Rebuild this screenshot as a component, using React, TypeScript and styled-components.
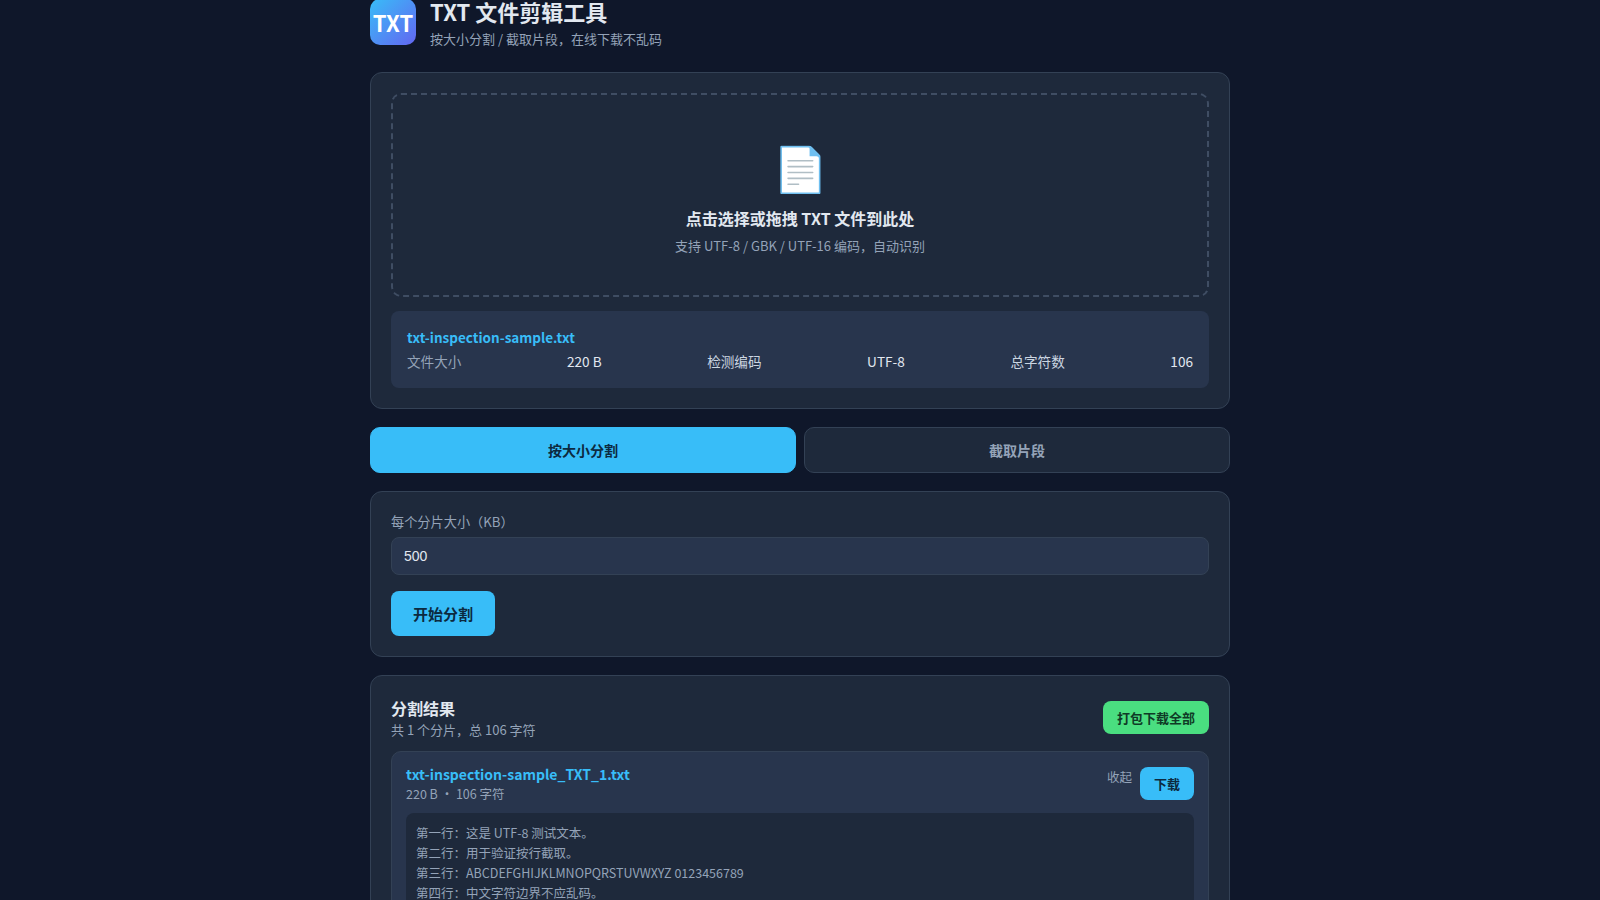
import { FC } from "react";
import styled, { createGlobalStyle } from "styled-components";

const GlobalStyle = createGlobalStyle`
	* {
		box-sizing: border-box;
	}
	html, body {
		margin: 0;
		height: 100%;
		overflow: hidden;
	}
	body {
		background: #0f172a;
		color: #e2e8f0;
		font-family: "Noto Sans CJK SC", "Noto Sans", sans-serif;
	}
`;

const previewLines = [
	"第一行：这是 UTF-8 测试文本。",
	"第二行：用于验证按行截取。",
	"第三行：ABCDEFGHIJKLMNOPQRSTUVWXYZ 0123456789",
	"第四行：中文字符边界不应乱码。",
];

const App: FC = () => {
	return (
		<>
			<GlobalStyle />
			<Page>
				<Header>
					<Logo>TXT</Logo>
					<div>
						<Title>TXT 文件剪辑工具</Title>
						<Subtitle>按大小分割 / 截取片段，在线下载不乱码</Subtitle>
					</div>
				</Header>

				<Card>
					<DropZone>
						<DropIcon>📄</DropIcon>
						<DropTitle>点击选择或拖拽 TXT 文件到此处</DropTitle>
						<DropHint>支持 UTF-8 / GBK / UTF-16 编码，自动识别</DropHint>
					</DropZone>
					<FileInfo>
						<FileName>txt-inspection-sample.txt</FileName>
						<FileStats>
							<StatLabel>文件大小</StatLabel>
							<StatValue>220 B</StatValue>
							<StatKey>检测编码</StatKey>
							<StatValue>UTF-8</StatValue>
							<StatKey>总字符数</StatKey>
							<StatValue>106</StatValue>
						</FileStats>
					</FileInfo>
				</Card>

				<Tabs>
					<Tab type="button" $active>
						按大小分割
					</Tab>
					<Tab type="button">截取片段</Tab>
				</Tabs>

				<Card>
					<FieldLabel htmlFor="chunk-size">每个分片大小（KB）</FieldLabel>
					<SizeInput id="chunk-size" defaultValue="500" />
					<StartBtn type="button">开始分割</StartBtn>
				</Card>

				<Card>
					<ResultHead>
						<div>
							<ResultTitle>分割结果</ResultTitle>
							<ResultMeta>共 1 个分片，总 106 字符</ResultMeta>
						</div>
						<ZipBtn type="button">打包下载全部</ZipBtn>
					</ResultHead>
					<Chunk>
						<ChunkHead>
							<div>
								<ChunkName>txt-inspection-sample_TXT_1.txt</ChunkName>
								<ChunkMeta>220 B ・ 106 字符</ChunkMeta>
							</div>
							<ChunkActions>
								<Collapse type="button">收起</Collapse>
								<DownloadBtn type="button">下载</DownloadBtn>
							</ChunkActions>
						</ChunkHead>
						<Preview>
							{previewLines.map((line) => (
								<div key={line}>{line}</div>
							))}
						</Preview>
					</Chunk>
				</Card>
			</Page>
		</>
	);
};

export default App;

const Page = styled.div`
	width: 860px;
	margin: -1px auto 0;
`;

const Header = styled.header`
	display: flex;
	align-items: flex-start;
	gap: 14px;
	margin-bottom: 23px;
`;

const Logo = styled.div`
	width: 46px;
	height: 46px;
	border-radius: 10px;
	background: linear-gradient(135deg, #38bdf8, #6366f1);
	color: #fff;
	font-size: 22px;
	font-weight: 700;
	display: flex;
	align-items: center;
	justify-content: center;
`;

const Title = styled.h1`
	margin: 0;
	font-size: 22px;
	font-weight: 700;
	line-height: 24px;
	color: #e2e8f0;
`;

const Subtitle = styled.p`
	margin: 6px 0 0;
	font-size: 13px;
	line-height: 20px;
	color: #94a3b8;
`;

const Card = styled.section`
	background: #1e293b;
	border: 1px solid #334155;
	border-radius: 12px;
	padding: 20px;
	margin-bottom: 18px;
`;

const DropZone = styled.div`
	height: 204px;
	border: 2px dashed #3f4d63;
	border-radius: 10px;
	display: flex;
	flex-direction: column;
	align-items: center;
	padding-top: 40px;
`;

const DropIcon = styled.div`
	font-size: 44px;
	line-height: 63px;
`;

const DropTitle = styled.div`
	font-size: 16px;
	font-weight: 600;
	line-height: 24px;
	margin-top: 8px;
	color: #e2e8f0;
`;

const DropHint = styled.div`
	font-size: 13px;
	line-height: 20px;
	margin-top: 6px;
	color: #94a3b8;
`;

const FileInfo = styled.div`
	margin-top: 14px;
	background: #28354d;
	border-radius: 8px;
	padding: 13px 16px 0;
	height: 77px;
`;

const FileName = styled.div`
	font-size: 13.5px;
	font-weight: 600;
	line-height: 26px;
	color: #38bdf8;
`;

const FileStats = styled.div`
	display: flex;
	justify-content: space-between;
	margin-top: 1px;
	font-size: 13.6px;
	line-height: 20px;
`;

const StatLabel = styled.span`
	color: #94a3b8;
`;

const StatKey = styled.span`
	color: #cbd5e1;
`;

const StatValue = styled.span`
	color: #e2e8f0;
`;

const Tabs = styled.div`
	display: grid;
	grid-template-columns: 1fr 1fr;
	gap: 8px;
	margin-bottom: 18px;
`;

const Tab = styled.button<{ $active?: boolean }>`
	height: 46px;
	border-radius: 10px;
	border: 1px solid ${(p) => (p.$active ? "#38bdf8" : "#334155")};
	background: ${(p) => (p.$active ? "#38bdf8" : "#1e293b")};
	color: ${(p) => (p.$active ? "#0c2a40" : "#94a3b8")};
	font-family: inherit;
	font-size: 14px;
	font-weight: 600;
`;

const FieldLabel = styled.label`
	display: block;
	font-size: 13.2px;
	line-height: 20px;
	margin-bottom: 5px;
	color: #94a3b8;
`;

const SizeInput = styled.input`
	display: block;
	width: 100%;
	height: 38px;
	background: #28354d;
	border: 1px solid #334155;
	border-radius: 8px;
	padding: 0 12px;
	color: #e2e8f0;
	font-family: "Liberation Sans", Arial, sans-serif;
	font-size: 14px;
`;

const StartBtn = styled.button`
	display: block;
	margin-top: 16px;
	width: 104px;
	height: 45px;
	border: none;
	border-radius: 8px;
	background: #38bdf8;
	color: #0c2a40;
	font-family: inherit;
	font-size: 15px;
	font-weight: 600;
`;

const ResultHead = styled.div`
	display: flex;
	justify-content: space-between;
	align-items: center;
	margin-bottom: 11px;
`;

const ResultTitle = styled.div`
	font-size: 16px;
	font-weight: 600;
	line-height: 24px;
	color: #e2e8f0;
`;

const ResultMeta = styled.div`
	font-size: 13px;
	line-height: 20px;
	color: #94a3b8;
`;

const ZipBtn = styled.button`
	height: 33px;
	width: 106px;
	margin-bottom: 1px;
	border: none;
	border-radius: 8px;
	background: #4ade80;
	color: #0f3a26;
	font-family: inherit;
	font-size: 13px;
	font-weight: 600;
`;

const Chunk = styled.div`
	background: #28354d;
	border: 1px solid #334155;
	border-radius: 10px;
	padding: 14px;
`;

const ChunkHead = styled.div`
	display: flex;
	justify-content: space-between;
	align-items: flex-start;
	margin-bottom: 10px;
`;

const ChunkName = styled.div`
	font-size: 14px;
	font-weight: 600;
	line-height: 16px;
	color: #38bdf8;
`;

const ChunkMeta = styled.div`
	margin-top: 3px;
	font-size: 12.5px;
	line-height: 18px;
	color: #94a3b8;
`;

const ChunkActions = styled.div`
	display: flex;
	align-items: flex-start;
	gap: 8px;
`;

const Collapse = styled.button`
	background: none;
	border: none;
	padding: 0;
	height: 20px;
	font-family: inherit;
	font-size: 12.5px;
	color: #94a3b8;
`;

const DownloadBtn = styled.button`
	width: 54px;
	height: 33px;
	margin-top: 1px;
	border: none;
	border-radius: 8px;
	background: #38bdf8;
	color: #0c2a40;
	font-family: inherit;
	font-size: 13px;
	font-weight: 600;
`;

const Preview = styled.div`
	background: #1e293b;
	border-radius: 8px;
	padding: 10px;
	font-size: 12.5px;
	line-height: 20px;
	color: #94a3b8;
`;
